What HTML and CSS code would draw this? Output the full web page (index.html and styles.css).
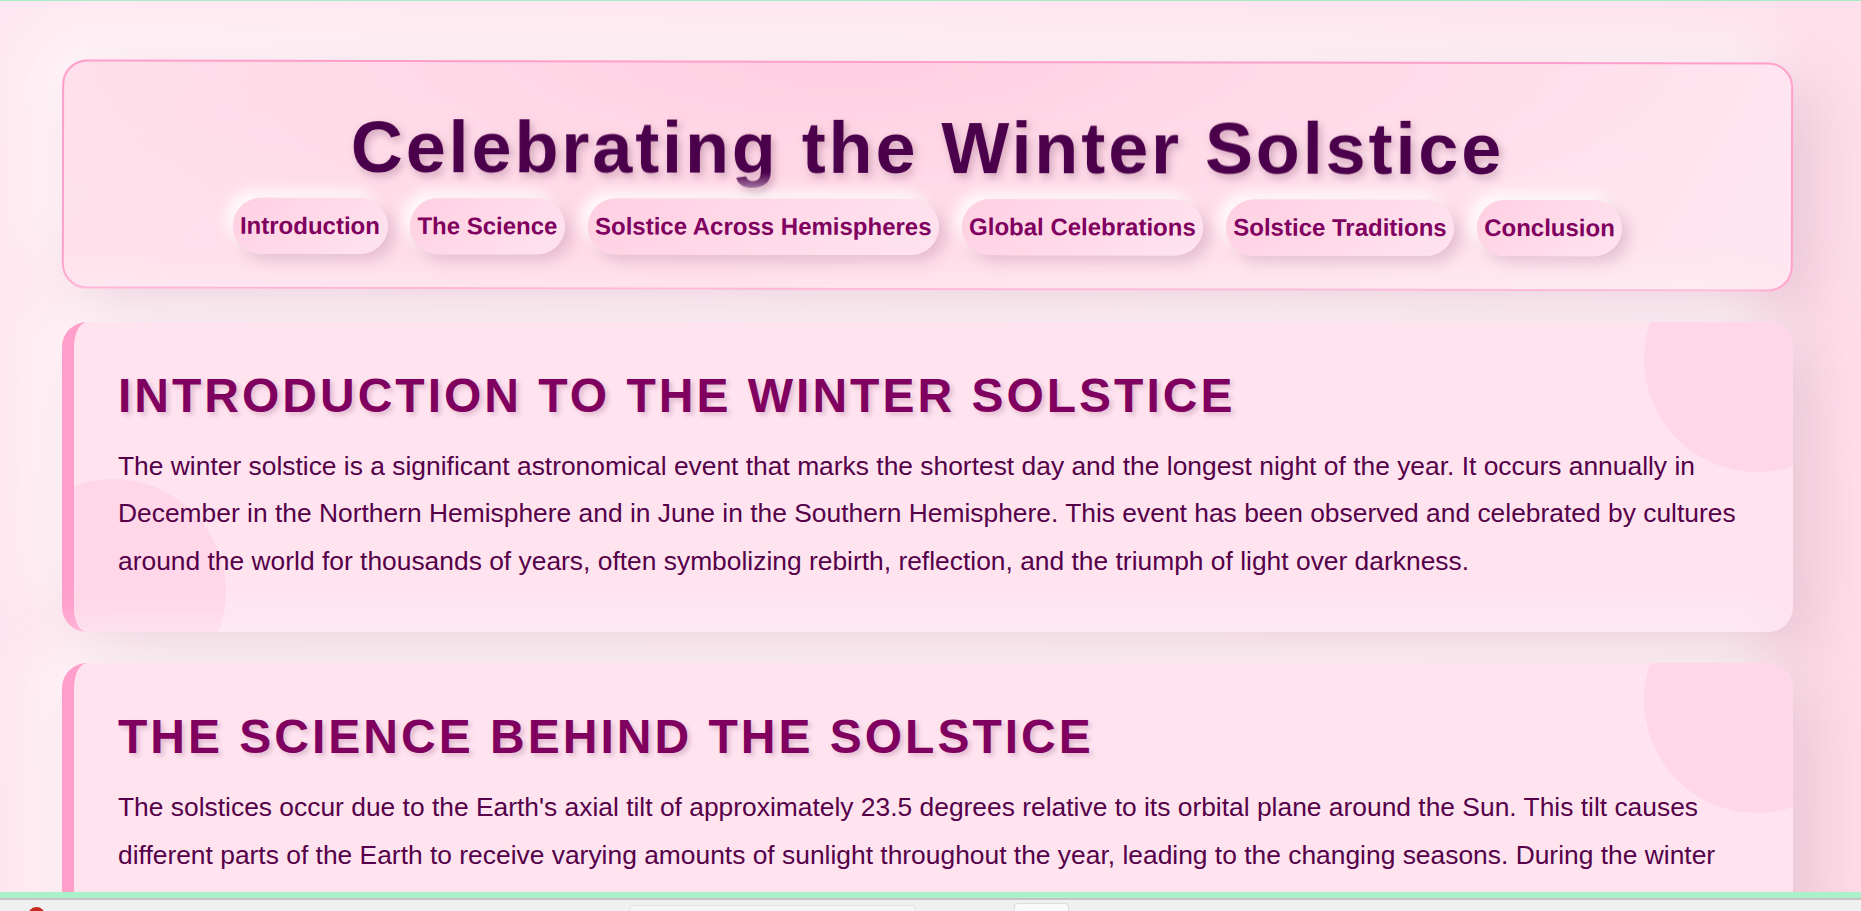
FILE: index.html
```html
<!DOCTYPE html>
<html lang="en">
<head>
<meta charset="utf-8">
<title>Celebrating the Winter Solstice</title>
<link rel="stylesheet" href="styles.css">
</head>
<body>
<div class="topline"></div>
<div class="page">
  <header class="hero">
    <h1 class="hero-title">Celebrating the Winter Solstice</h1>
    <nav class="nav">
      <a class="nav-link" href="#introduction">Introduction</a>
      <a class="nav-link" href="#science">The Science</a>
      <a class="nav-link" href="#hemispheres">Solstice Across Hemispheres</a>
      <a class="nav-link" href="#celebrations">Global Celebrations</a>
      <a class="nav-link" href="#traditions">Solstice Traditions</a>
      <a class="nav-link" href="#conclusion">Conclusion</a>
    </nav>
  </header>

  <main class="sections">
    <section class="card" id="introduction">
      <h2 class="card-title">Introduction to the Winter Solstice</h2>
      <p class="card-text">The winter solstice is a significant astronomical event that marks the shortest day and the longest night of the year. It occurs annually in December in the Northern Hemisphere and in June in the Southern Hemisphere. This event has been observed and celebrated by cultures around the world for thousands of years, often symbolizing rebirth, reflection, and the triumph of light over darkness.</p>
    </section>

    <section class="card" id="science">
      <h2 class="card-title">The Science Behind the Solstice</h2>
      <p class="card-text">The solstices occur due to the Earth's axial tilt of approximately 23.5 degrees relative to its orbital plane around the Sun. This tilt causes different parts of the Earth to receive varying amounts of sunlight throughout the year, leading to the changing seasons. During the winter solstice, one hemisphere is tilted the farthest away from the Sun, resulting in the shortest period of daylight. At the same moment, the opposite hemisphere is tilted closest to the Sun and enjoys its summer solstice, with the longest day of the year and the Sun reaching its highest point in the sky.</p>
    </section>

    <section class="card" id="hemispheres">
      <h2 class="card-title">Solstice Across Hemispheres</h2>
      <p class="card-text">While the Northern Hemisphere experiences its winter solstice around December 21st or 22nd, the Southern Hemisphere marks its winter solstice around June 20th or 21st. This means that when one half of the world celebrates the return of the light, the other half is enjoying the longest day of the year.</p>
    </section>

    <section class="card" id="celebrations">
      <h2 class="card-title">Global Celebrations</h2>
      <p class="card-text">From Yule in Northern Europe to Dongzhi in China, Inti Raymi in Peru and Shab-e Yalda in Iran, communities across the globe gather to mark the solstice with feasts, fires, music and time spent with loved ones.</p>
    </section>

    <section class="card" id="traditions">
      <h2 class="card-title">Solstice Traditions</h2>
      <p class="card-text">Common traditions include lighting candles and bonfires, decorating with evergreens, sharing seasonal foods, and staying awake through the long night to welcome the rising sun.</p>
    </section>

    <section class="card" id="conclusion">
      <h2 class="card-title">Conclusion</h2>
      <p class="card-text">The winter solstice reminds us of the natural rhythms of our planet and the enduring human desire to find light and warmth in the darkest time of the year.</p>
    </section>
  </main>
</div>

<div class="sysbar">
  <div class="sysbar-band"></div>
  <div class="sysbar-body">
    <span class="sysbar-dot"></span>
    <span class="sysbar-tab"></span>
    <span class="sysbar-key"></span>
  </div>
</div>
</body>
</html>
```

FILE: styles.css
```css
html, body {
  margin: 0;
  padding: 0;
}

body {
  font-family: "Liberation Sans", Arial, Helvetica, sans-serif;
  background: linear-gradient(135deg, #ffe8f1 0%, #ffe3ee 45%, #ffdbe8 100%);
  background-attachment: fixed;
  color: #5a0050;
  min-height: 100vh;
}

.topline {
  height: 1px;
  background: #a4ecc4;
}

.page {
  padding: 60px 68px 80px 62px;
  display: flex;
  flex-direction: column;
  gap: 32px;
}

/* ---------- Header ---------- */
.hero {
  border: 2px solid #ff9fcb;
  border-radius: 25px;
  padding: 44px 32px 33px;
  text-align: center;
  background:
    radial-gradient(ellipse 55% 90% at 45% 0%, #ffcfe1 0%, rgba(255, 214, 229, 0.6) 45%, rgba(255, 228, 238, 0) 100%),
    linear-gradient(120deg, #ffe2ed 0%, #ffdae8 40%, #ffe6f0 100%);
  box-shadow:
    20px 20px 60px rgba(205, 160, 180, 0.45),
    -20px -20px 60px rgba(255, 255, 255, 0.85);
  transform: rotate(0.1deg);
}

.hero-title {
  margin: 0 0 10px;
  font-size: 72px;
  font-weight: bold;
  letter-spacing: 2.9px;
  line-height: normal;
  color: #4b004b;
  background: linear-gradient(to bottom, #4b004b 0%, #4b004b 80%, #a878a6 100%);
  -webkit-background-clip: text;
  background-clip: text;
  -webkit-text-fill-color: transparent;
  filter: drop-shadow(3px 4px 4px rgba(90, 30, 70, 0.28));
}

.nav {
  display: flex;
  justify-content: center;
  flex-wrap: wrap;
  gap: 22.5px;
}

.nav-link {
  font-size: 24px;
  font-weight: bold;
  line-height: normal;
  color: #800060;
  text-decoration: none;
  padding: 14px 7.5px;
  border-radius: 30px;
  background: linear-gradient(135deg, #ffd0e2 0%, #ffe3ef 100%);
  box-shadow:
    7px 7px 14px rgba(200, 150, 172, 0.45),
    -7px -7px 14px rgba(255, 255, 255, 0.9);
}

/* ---------- Sections ---------- */
.sections {
  display: flex;
  flex-direction: column;
  gap: 31px;
}

.card {
  position: relative;
  overflow: hidden;
  background: #ffe4f0;
  border-left: 12px solid #ff9dcb;
  border-radius: 25px;
  padding: 48px 48px 47px 44px;
  box-shadow:
    20px 20px 60px rgba(205, 160, 180, 0.45),
    -20px -20px 60px rgba(255, 255, 255, 0.85);
}

.card::before,
.card::after {
  content: "";
  position: absolute;
  width: 226px;
  height: 226px;
  border-radius: 50%;
  background: #ffd7e8;
}

.card::before {
  top: -76px;
  right: -77px;
}

.card::after {
  bottom: -73px;
  left: -74px;
}

.card-title {
  position: relative;
  z-index: 1;
  margin: 0 0 20px;
  font-size: 48px;
  font-weight: bold;
  line-height: 1.1;
  letter-spacing: 3px;
  text-transform: uppercase;
  color: #800060;
  text-shadow: 3px 3px 5px rgba(120, 40, 90, 0.22);
}

.card-text {
  position: relative;
  z-index: 1;
  margin: 0;
  font-size: 26.4px;
  line-height: 47.5px;
  color: #550049;
}

/* ---------- Bottom system strip ---------- */
.sysbar {
  position: fixed;
  z-index: 100;
  left: 0;
  right: 0;
  bottom: 0;
  display: flex;
  flex-direction: column;
}

.sysbar-band {
  height: 6px;
  background: #aaf0c9;
}

.sysbar-body {
  height: 11px;
  overflow: hidden;
  background: #f0f0f0;
  border-top: 2px solid #c4c4c4;
  display: flex;
  align-items: flex-start;
}

.sysbar-dot {
  flex: none;
  width: 17px;
  height: 17px;
  margin: 7px 0 0 28px;
  border-radius: 50%;
  background: #c62a1d;
}

.sysbar-tab {
  flex: none;
  width: 285px;
  height: 12px;
  margin: 5px 0 0 584px;
  border-radius: 4px 4px 0 0;
  background: #f6f4f4;
  border: 1px solid #e2e2e2;
}

.sysbar-key {
  flex: none;
  width: 53px;
  height: 12px;
  margin: 3px 0 0 98px;
  border-radius: 4px 4px 0 0;
  background: #fafafa;
  border: 1px solid #dcdcdc;
}
```
